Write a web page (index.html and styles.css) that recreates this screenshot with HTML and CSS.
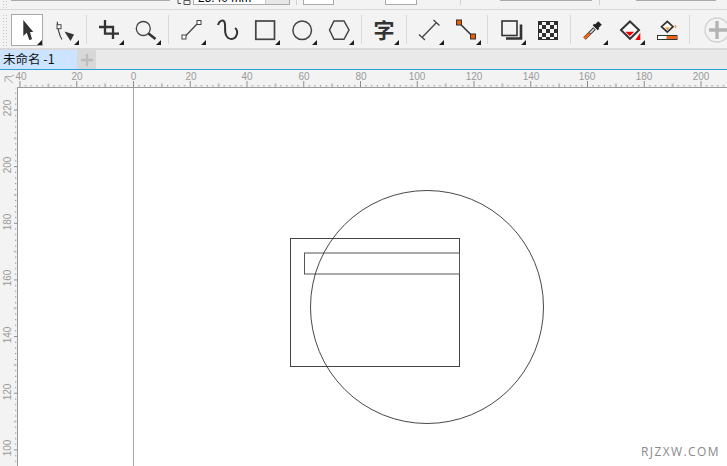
FILE: index.html
```html
<!DOCTYPE html>
<html lang="zh">
<head>
<meta charset="utf-8">
<title>未命名 -1</title>
<link rel="stylesheet" href="styles.css">
</head>
<body>
<div class="app">
  <div class="propbar">
    <div class="grip grip-top"></div>
    <div class="stub stub-first"></div>
    <svg class="lock" width="15" height="5"><path d="M1 0V3.5H4M7 .5H13V4.5H7Z" fill="none" stroke="#555"/></svg>
    <div class="field field-size"><span class="field-text">25.40 mm</span><span class="field-spin"></span></div>
    <div class="vsep vsep-a"></div>
    <div class="field field-small"></div>
    <div class="field field-small field-b"></div>
    <div class="vsep vsep-b"></div>
    <div class="stub stub-c"></div>
    <div class="vsep vsep-c"></div>
    <div class="stub stub-d"></div>
  </div>

  <div class="toolbar">
    <div class="grip grip-main"></div>
    <div class="tool-active">
      <svg width="32" height="32" class="icon-active">
        <polygon points="12.3,6 12.3,22 15.7,18.7 18.3,26 21,25.3 19,18 22.3,18" fill="#333"/>
        <polygon class="tri" points="31,26 31,31 26,31"/>
      </svg>
    </div>
    <svg width="37" height="32">
      <path d="M8.3 7.7C8.3 12 10 21 13 25.5" fill="none" stroke="#444" stroke-width="1.2"/>
      <rect x="8" y="10.7" width="4" height="4" fill="#fff" stroke="#444"/>
      <polygon points="15.5,17.5 25,20.5 21.5,27" fill="#333"/>
      <polygon class="tri" points="30,26 30,31 25,31"/>
    </svg>
    <div class="sep"></div>
    <svg width="37" height="32">
      <path d="M6 13H20V25M12 6V19.7H26" fill="none" stroke="#333" stroke-width="2.3"/>
      <polygon class="tri" points="31,26 31,31 26,31"/>
    </svg>
    <svg width="38" height="32">
      <circle cx="13.3" cy="14.5" r="7" fill="none" stroke="#444" stroke-width="1.3"/>
      <path d="M18.5 19.5L25.5 25" stroke="#333" stroke-width="2.6"/>
      <polygon class="tri" points="31,26 31,31 26,31"/>
    </svg>
    <div class="sep"></div>
    <svg width="38" height="32">
      <path d="M10.5 22L22 10" stroke="#444" stroke-width="1.2"/>
      <rect x="7" y="21" width="4" height="4" fill="#fff" stroke="#444"/>
      <rect x="22" y="6.5" width="4" height="4" fill="#fff" stroke="#444"/>
      <polygon class="tri" points="31,26 31,31 26,31"/>
    </svg>
    <svg width="36" height="32">
      <path d="M5 11C6 7 10 5 11.5 8C13 11 11 17 13 21C15 26 22 27 24 20C24.5 17 23.5 15 22 14" fill="none" stroke="#333" stroke-width="2"/>
    </svg>
    <svg width="37" height="32">
      <rect x="6.8" y="7" width="18.7" height="18.3" fill="none" stroke="#444" stroke-width="1.7"/>
      <polygon class="tri" points="31,26 31,31 26,31"/>
    </svg>
    <svg width="37" height="32">
      <circle cx="16.2" cy="16.3" r="9.3" fill="none" stroke="#444" stroke-width="1.5"/>
      <polygon class="tri" points="31,26 31,31 26,31"/>
    </svg>
    <svg width="38" height="32">
      <polygon points="11,7 21,7 26,16 21,25.3 11,25.3 6.5,16" fill="none" stroke="#444" stroke-width="1.5"/>
      <polygon class="tri" points="31,26 31,31 26,31"/>
    </svg>
    <div class="sep"></div>
    <svg width="38" height="32">
      <text x="16" y="24" class="char">字</text>
      <polygon class="tri" points="31,26 31,31 26,31"/>
    </svg>
    <div class="sep"></div>
    <svg width="36" height="32">
      <path d="M9 23.5L23.5 8.5M6 20.5L12 26M20.5 6L26.5 11.5" fill="none" stroke="#444" stroke-width="1.3"/>
      <polygon class="tri" points="31,26 31,31 26,31"/>
    </svg>
    <svg width="38" height="32">
      <path d="M10 8.7L24 22.7" stroke="#333" stroke-width="1.6"/>
      <rect x="7.5" y="6" width="5" height="5" fill="#f15a00" stroke="#333"/>
      <rect x="21.5" y="20" width="5" height="5" fill="#f15a00" stroke="#333"/>
      <polygon class="tri" points="32,26 32,31 27,31"/>
    </svg>
    <div class="sep sep-9"></div>
    <svg width="36" height="32">
      <path d="M10 24.5H25V10.5" fill="none" stroke="#333" stroke-width="2.6"/>
      <rect x="6" y="7" width="15" height="14.5" fill="#f3f3f3" stroke="#333" stroke-width="1.6"/>
      <polygon class="tri" points="30,26 30,31 25,31"/>
    </svg>
    <svg width="38" height="32">
      <defs>
        <pattern id="check" width="8" height="8" patternUnits="userSpaceOnUse" x="6" y="7">
          <rect width="8" height="8" fill="#2e2e2e"/>
          <rect width="4" height="4" x="4" fill="#f4f4f4"/>
          <rect width="4" height="4" y="4" fill="#f4f4f4"/>
        </pattern>
      </defs>
      <rect x="6" y="7" width="20" height="19" fill="url(#check)"/>
      <rect x="6.5" y="7.5" width="19" height="18" fill="none" stroke="#2e2e2e"/>
    </svg>
    <div class="sep sep-8"></div>
    <svg width="37" height="32">
      <path d="M6.5 24.5L16.5 14.5" stroke="#3a3a3a" stroke-width="3.6"/>
      <path d="M6.5 24.5L11.5 19.5" stroke="#e8661c" stroke-width="2.6"/>
      <path d="M12 19L16 15" stroke="#ddd" stroke-width="1.6"/>
      <path d="M15.5 10.5L20.5 15.5" stroke="#222" stroke-width="2.2"/>
      <path d="M18 13L22 9" stroke="#222" stroke-width="5"/>
      <polygon class="tri" points="30,26 30,31 25,31"/>
    </svg>
    <svg width="36" height="32">
      <polygon points="15,7.5 24,16 15,24.8 6,16" fill="#fff" stroke="#333" stroke-width="2"/>
      <polygon points="10.3,17.7 19.3,17.7 14.7,22" fill="#ee0000"/>
      <polygon points="25.3,18.7 25.3,26 20.3,26" fill="#ee0000"/>
      <polygon class="tri" points="30,26 30,31 25,31"/>
    </svg>
    <svg width="38" height="32">
      <polygon points="16.3,7.5 22,12.7 16.3,18 10.5,12.7" fill="#fff" stroke="#333" stroke-width="1.7"/>
      <polygon points="14,13.5 19,13.5 16.5,16" fill="#f08a24"/>
      <path d="M24.5 11V14" stroke="#f0a050" stroke-width="1.5"/>
      <rect x="6.5" y="21.5" width="19.5" height="4" fill="#fff" stroke="#333"/>
      <rect x="15.5" y="22" width="10.5" height="3" fill="#e8661c"/>
    </svg>
    <div class="sep sep-12"></div>
    <svg width="32" height="32">
      <circle cx="16" cy="16" r="12" fill="none" stroke="#d2d2d2" stroke-width="1.4"/>
      <path d="M8 16H26M16 7V25" stroke="#b4b4b4" stroke-width="3.4"/>
    </svg>
  </div>

  <div class="tabs">
    <div class="tab">未命名 -1</div>
    <div class="tab-add">
      <svg width="12" height="12"><path d="M0 6H12M6 0V12" stroke="#bdbdbd" stroke-width="2.4"/></svg>
    </div>
  </div>

  <svg class="ruler-h" width="727" height="18">
    <defs>
      <pattern id="ticks-h" width="56.75" height="18" patternUnits="userSpaceOnUse" x="133" y="0">
        <rect x="0" y="11" width="1" height="6" fill="#8c8c8c"/>
        <rect x="5.5" y="15" width="1" height="1.5" fill="#8c8c8c"/>
        <rect x="11.2" y="15" width="1" height="1.5" fill="#8c8c8c"/>
        <rect x="16.9" y="15" width="1" height="1.5" fill="#8c8c8c"/>
        <rect x="22.6" y="15" width="1" height="1.5" fill="#8c8c8c"/>
        <rect x="28.4" y="13.5" width="1" height="3.5" fill="#8c8c8c"/>
        <rect x="34" y="15" width="1" height="1.5" fill="#8c8c8c"/>
        <rect x="39.7" y="15" width="1" height="1.5" fill="#8c8c8c"/>
        <rect x="45.4" y="15" width="1" height="1.5" fill="#8c8c8c"/>
        <rect x="51.1" y="15" width="1" height="1.5" fill="#8c8c8c"/>
      </pattern>
    </defs>
    <rect x="17" y="0" width="710" height="17" fill="url(#ticks-h)"/>
    <rect x="17" y="17" width="710" height="1" fill="#999"/>
    <path d="M5 6.5H10M5 6.5V12M6 7L13 13M10 7L14 5" fill="none" stroke="#aaa"/>
    <g class="rlabel">
      <text x="21" y="10">40</text>
      <text x="77" y="10">20</text>
      <text x="133.5" y="10">0</text>
      <text x="191" y="10">20</text>
      <text x="247" y="10">40</text>
      <text x="304" y="10">60</text>
      <text x="361" y="10">80</text>
      <text x="417" y="10">100</text>
      <text x="474" y="10">120</text>
      <text x="531" y="10">140</text>
      <text x="587" y="10">160</text>
      <text x="644" y="10">180</text>
      <text x="701" y="10">200</text>
    </g>
  </svg>

  <div class="workspace">
    <svg class="ruler-v" width="18" height="378">
      <defs>
        <pattern id="ticks-v" width="18" height="56.65" patternUnits="userSpaceOnUse" x="0" y="21.5">
          <rect x="14" y="0" width="3" height="1" fill="#8c8c8c"/>
          <rect x="15" y="5.7" width="1.3" height="1" fill="#8c8c8c"/>
          <rect x="15" y="11.3" width="1.3" height="1" fill="#8c8c8c"/>
          <rect x="15" y="17" width="1.3" height="1" fill="#8c8c8c"/>
          <rect x="15" y="22.7" width="1.3" height="1" fill="#8c8c8c"/>
          <rect x="14" y="28.3" width="2.5" height="1" fill="#8c8c8c"/>
          <rect x="15" y="34" width="1.3" height="1" fill="#8c8c8c"/>
          <rect x="15" y="39.7" width="1.3" height="1" fill="#8c8c8c"/>
          <rect x="15" y="45.3" width="1.3" height="1" fill="#8c8c8c"/>
          <rect x="15" y="51" width="1.3" height="1" fill="#8c8c8c"/>
        </pattern>
      </defs>
      <rect x="0" y="0" width="17" height="378" fill="url(#ticks-v)"/>
      <rect x="17" y="0" width="1" height="378" fill="#999"/>
      <g class="rlabel">
        <text transform="translate(11 20) rotate(-90)">220</text>
        <text transform="translate(11 77) rotate(-90)">200</text>
        <text transform="translate(11 134) rotate(-90)">180</text>
        <text transform="translate(11 190) rotate(-90)">160</text>
        <text transform="translate(11 247) rotate(-90)">140</text>
        <text transform="translate(11 304) rotate(-90)">120</text>
        <text transform="translate(11 360) rotate(-90)">100</text>
      </g>
    </svg>
    <div class="canvas">
      <svg class="drawing" width="709" height="378">
        <path d="M115.5 0V378" stroke="#a6a6a6" fill="none"/>
        <rect x="272.5" y="150.5" width="169" height="128" fill="none" stroke="#444"/>
        <rect x="286.5" y="165" width="155" height="21" fill="none" stroke="#555"/>
        <circle cx="409" cy="219" r="116.5" fill="none" stroke="#333" stroke-width=".9"/>
      </svg>
      <div class="watermark">RJZXW.COM</div>
    </div>
  </div>
</div>
</body>
</html>
```

FILE: styles.css
```css
* { box-sizing: border-box; }
html, body { margin: 0; padding: 0; background: #fff; }
body { width: 727px; height: 466px; overflow: hidden; font-family: "Liberation Sans", "Noto Sans CJK SC", sans-serif; }
svg { display: block; flex: none; }
.app { display: flex; flex-direction: column; width: 727px; height: 466px; overflow: hidden; }

.propbar { display: flex; align-items: flex-start; height: 10px; padding-left: 2px; background: #f3f3f3; border-bottom: 1px solid #d9d9d9; overflow: hidden; }
.grip { flex: none; width: 6px; background-image: radial-gradient(circle, #c4c4c4 0.8px, transparent 1px); background-size: 3px 3px; }
.grip-top { height: 9px; margin-right: 3px; }
.stub { flex: none; height: 1px; background: #aaa; }
.stub-first { width: 159px; }
.lock { margin-left: 7px; margin-right: 1px; }
.field { flex: none; display: flex; align-items: flex-end; height: 5px; background: #fff; border: 1px solid #aaa; border-top: 0; overflow: hidden; }
.field-size { width: 97px; }
.field-text { flex: 1; font-size: 12px; line-height: 12px; padding-left: 4px; color: #000; }
.field-spin { flex: none; width: 24px; height: 5px; background: #e8e8e8; border-left: 1px solid #ccc; }
.field-small { width: 31px; }
.field-b { width: 32px; margin-left: 51px; }
.vsep { flex: none; width: 1px; height: 5px; background: #d0d0d0; }
.vsep-a { margin: 0 6px; }
.vsep-b { margin: 0 39px 0 43px; }
.vsep-c { margin: 0 36px 0 7px; }
.stub-c { width: 92px; }
.stub-d { width: 80px; }

.toolbar { display: flex; align-items: flex-start; height: 40px; padding-top: 4px; padding-left: 2px; background: #f3f3f3; border-bottom: 2px solid #d9d9d9; }
.grip-main { height: 32px; margin-right: 3px; }
.tool-active { flex: none; width: 32px; height: 32px; margin-right: 6px; background: #fff; box-shadow: inset 0 0 0 1px #a8a8a8; }
.tri { fill: #1e1e1e; }
.char { font-family: "Noto Sans CJK SC", sans-serif; font-size: 21px; font-weight: 700; fill: #333; text-anchor: middle; }
.sep { flex: none; width: 7px; height: 29px; margin-top: 1px; border-left: 1px solid #d9d9d9; }
.sep-8 { width: 8px; }
.sep-9 { width: 9px; }
.sep-12 { width: 12px; }

.tabs { display: flex; height: 20px; background: #e9e9e9; border-bottom: 1px solid #2a9fd8; }
.tab { flex: none; width: 77px; padding-left: 3px; background: #cce4ff; font-family: "Noto Sans CJK SC", sans-serif; font-size: 12.5px; line-height: 18px; color: #111; white-space: pre; }
.tab-add { flex: none; display: flex; align-items: center; justify-content: center; width: 19px; background: #d8d8d8; }

.ruler-h { background: #f3f3f3; }
.rlabel text { font-family: "Liberation Sans", sans-serif; font-size: 10px; fill: #9a9a9a; text-anchor: middle; }

.workspace { display: flex; flex: 1; min-height: 0; }
.ruler-v { background: #f3f3f3; }
.canvas { position: relative; flex: 1; background: #fff; }
.watermark { position: absolute; right: 7px; bottom: 6px; font-family: "Open Sans", "Liberation Sans", sans-serif; font-size: 12px; letter-spacing: 1.4px; color: #8a8a8a; }
```
